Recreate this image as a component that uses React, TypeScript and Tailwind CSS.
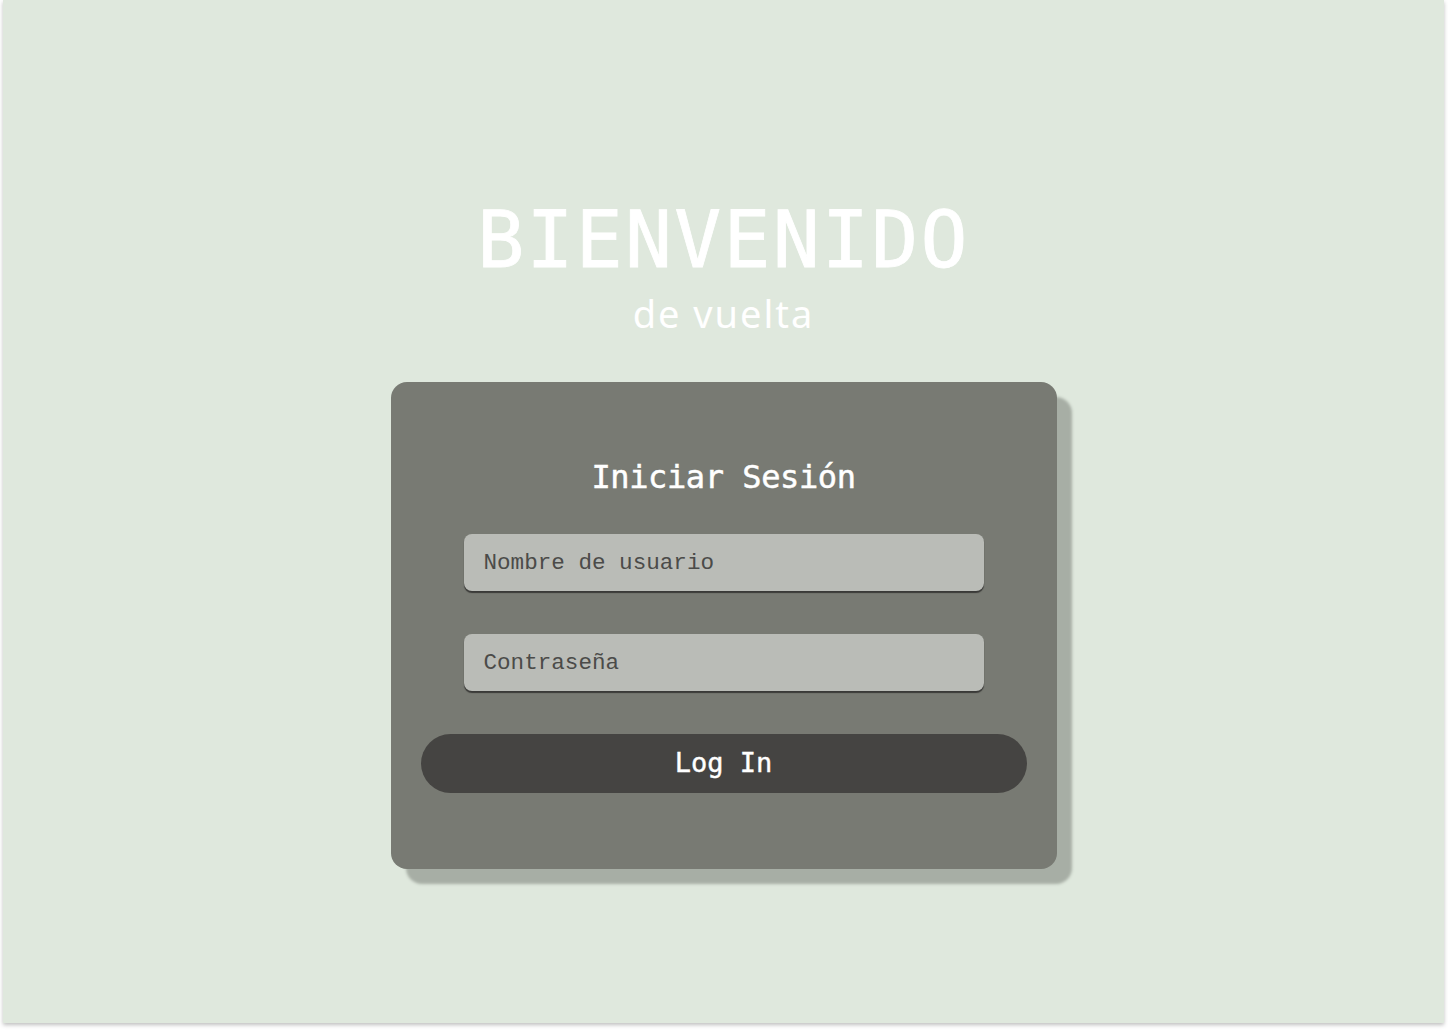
import { useState } from "react";

export default function App() {
  const [usuario, setUsuario] = useState("");
  const [clave, setClave] = useState("");

  return (
    <div className="w-full min-h-screen bg-white">
      <div className="ml-[3px] w-[1441px] h-[1023px] bg-[#dfe8dd] shadow-[0_2px_4px_rgba(0,0,0,0.25)] flex flex-col items-center pt-[201px]">
        <h1 className="text-[78px] leading-[78px] tracking-[2.3px] text-white font-['DejaVu_Sans_Mono',monospace] [-webkit-text-stroke:0.8px_white]">
          BIENVENIDO
        </h1>
        <p className="mt-[12px] text-[38px] leading-[44px] tracking-[2px] text-white font-['Noto_Sans',sans-serif]">
          de vuelta
        </p>

        <form
          className="mt-[47px] w-[666px] h-[487px] rounded-[16px] bg-[#787a73] shadow-[15px_15px_3px_#a7aea5] flex flex-col items-center pt-[77px] px-[30px]"
          onSubmit={(e) => e.preventDefault()}
        >
          <p className="text-[32px] leading-[36px] tracking-[-0.4px] text-white font-['DejaVu_Sans_Mono',monospace] [-webkit-text-stroke:0.5px_white]">
            Iniciar Sesión
          </p>

          <input
            type="text"
            value={usuario}
            onChange={(e) => setUsuario(e.target.value)}
            placeholder="Nombre de usuario"
            className="mt-[39px] w-[520px] h-[57px] rounded-[8px] bg-[#babcb7] pl-[20px] text-[22.6px] text-[#3f3f3d] placeholder:text-[#4b4b49] shadow-[0_2px_1px_#3a3a38] outline-none font-['Liberation_Mono',monospace]"
          />

          <input
            type="password"
            value={clave}
            onChange={(e) => setClave(e.target.value)}
            placeholder="Contraseña"
            className="mt-[43px] w-[520px] h-[57px] rounded-[8px] bg-[#babcb7] pl-[20px] text-[22.6px] text-[#3f3f3d] placeholder:text-[#4b4b49] shadow-[0_2px_1px_#3a3a38] outline-none font-['Liberation_Mono',monospace]"
          />

          <button
            type="submit"
            className="mt-[43px] w-[606px] h-[59px] rounded-full bg-[#454442] text-white text-[27px] font-['DejaVu_Sans_Mono',monospace] [-webkit-text-stroke:0.4px_white]"
          >
            Log In
          </button>
        </form>
      </div>
    </div>
  );
}
